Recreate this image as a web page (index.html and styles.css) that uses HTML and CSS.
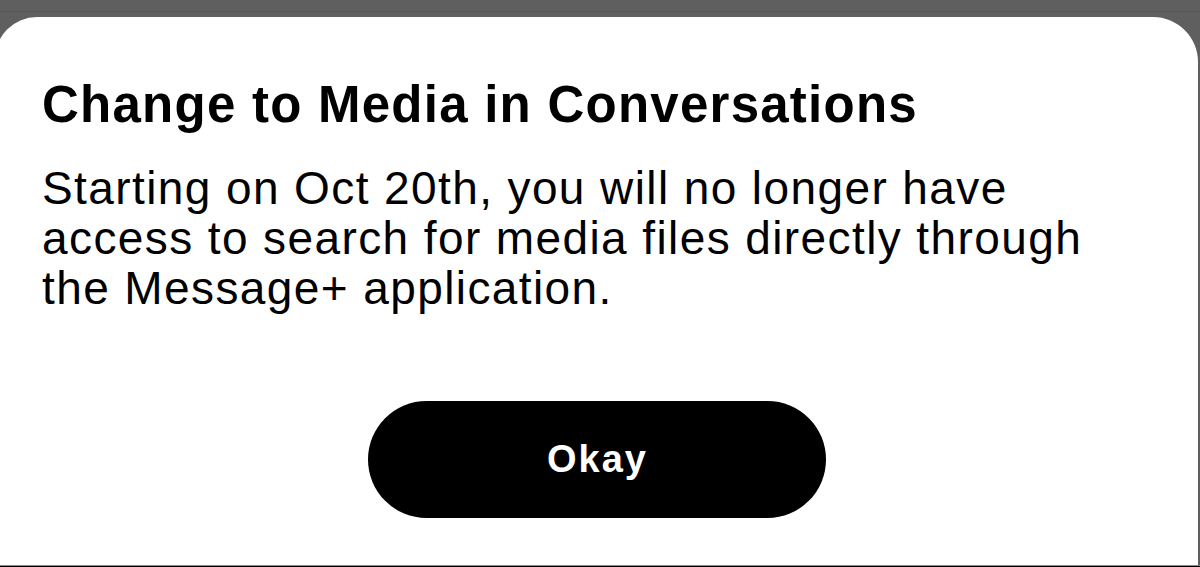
FILE: index.html
```html
<!DOCTYPE html>
<html lang="en">
<head>
<meta charset="utf-8">
<title>Change to Media in Conversations</title>
<link rel="stylesheet" href="styles.css">
</head>
<body>
<div class="topline"></div>
<div class="sheet">
  <h1 class="title">Change to Media in Conversations</h1>
  <p class="message">Starting on Oct 20th, you will no longer have access to search for media files directly through the Message+ application.</p>
  <div class="actions">
    <button class="okay" type="button">Okay</button>
  </div>
</div>
<div class="bottomline"></div>
</body>
</html>
```

FILE: styles.css
```css
html, body {
  margin: 0;
  padding: 0;
}
body {
  width: 1200px;
  height: 567px;
  overflow: hidden;
  background: #5f5f5f;
  font-family: "Liberation Sans", Arial, sans-serif;
  color: #000;
}
.topline {
  height: 1px;
  margin-top: 11px;
  background: #565656;
}
.sheet {
  box-sizing: border-box;
  margin-top: 5px;
  margin-left: -5px;
  width: 1203px;
  height: 548px;
  background: #fff;
  border-radius: 42px 45px 0 0;
  padding: 60px 0 0 47px;
}
.title {
  margin: 0;
  font-size: 51px;
  line-height: 56px;
  font-weight: 700;
  letter-spacing: 1.25px;
}
.message {
  margin: 30px 0 0;
  width: 1055px;
  font-size: 46px;
  line-height: 50px;
  font-weight: 400;
  letter-spacing: 1.4px;
}
.actions {
  display: flex;
  justify-content: center;
  margin-top: 88px;
  padding-right: 47px;
}
.okay {
  width: 458px;
  height: 117px;
  border: 0;
  border-radius: 59px;
  background: #000;
  color: #fff;
  font-family: "Liberation Sans", Arial, sans-serif;
  font-size: 38px;
  font-weight: 700;
  letter-spacing: 2px;
  text-indent: 2px;
  padding: 0;
}
.bottomline {
  height: 1px;
  background: #8a8a8a;
  border-bottom: 2px solid #000;
}
```
